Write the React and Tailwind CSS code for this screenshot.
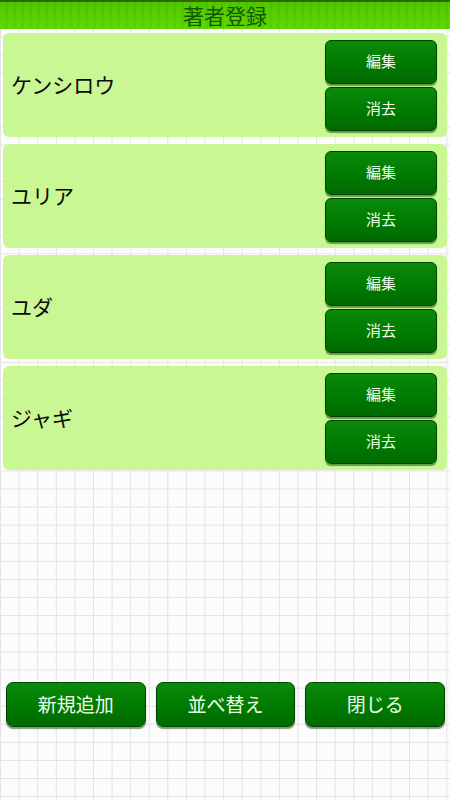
const authors = ["ケンシロウ", "ユリア", "ユダ", "ジャギ"];

const font = "font-['Noto_Sans_CJK_JP','Noto_Sans',sans-serif]";

function SmallButton({ label }) {
  return (
    <button className="h-[44px] w-[112px] rounded-[6px] border border-[#004400] bg-[linear-gradient(to_bottom,#0a8a0a,#007a00_55%,#006a00)] text-[15px] text-[#eefde8] shadow-[0_2px_1px_rgba(0,60,0,0.5)]">
      {label}
    </button>
  );
}

function BigButton({ label }) {
  return (
    <button className="h-[45px] rounded-[7px] border border-[#004400] bg-[linear-gradient(to_bottom,#0a8a0a,#007a00_55%,#006a00)] text-[19px] text-[#eefde8] shadow-[0_2px_1px_rgba(0,60,0,0.5)]">
      {label}
    </button>
  );
}

export default function App() {
  return (
    <div
      className={`${font} relative flex h-[800px] w-[450px] flex-col overflow-hidden bg-[#fcfcfc] bg-[linear-gradient(to_right,#e3e3e3_1px,transparent_1px),linear-gradient(to_bottom,#e3e3e3_1px,transparent_1px)] bg-[size:18.6px_18.1px] bg-[position:0px_0px]`}
    >
      {/* header */}
      <div className="relative flex h-[29px] items-center justify-center border-t-2 border-[#2a6a00] bg-[repeating-linear-gradient(to_right,#5ad400_0px,#5ad400_5px,#52cc00_5px,#52cc00_8px)]">
        <div className="absolute inset-x-0 top-0 h-[27px] bg-[linear-gradient(to_bottom,rgba(40,120,0,0.15),rgba(120,230,0,0.2))]" />
        <span className="relative text-[21px] leading-none text-[#125a00]">著者登録</span>
      </div>

      {/* author list */}
      <div className="flex flex-col gap-[7px] px-[3px] pt-[4px]">
        {authors.map((name) => (
          <div
            key={name}
            className="flex h-[104px] items-center justify-between rounded-[6px] bg-[#c9f793] pl-[8px] pr-[10px]"
          >
            <span className="text-[21px] text-[#0a0a0a]">{name}</span>
            <div className="flex flex-col gap-[3px]">
              <SmallButton label="編集" />
              <SmallButton label="消去" />
            </div>
          </div>
        ))}
      </div>

      <div className="flex-1" />

      {/* bottom buttons */}
      <div className="grid grid-cols-3 gap-[10px] pb-[73px] pl-[6px] pr-[5px]">
        <BigButton label="新規追加" />
        <BigButton label="並べ替え" />
        <BigButton label="閉じる" />
      </div>
    </div>
  );
}
